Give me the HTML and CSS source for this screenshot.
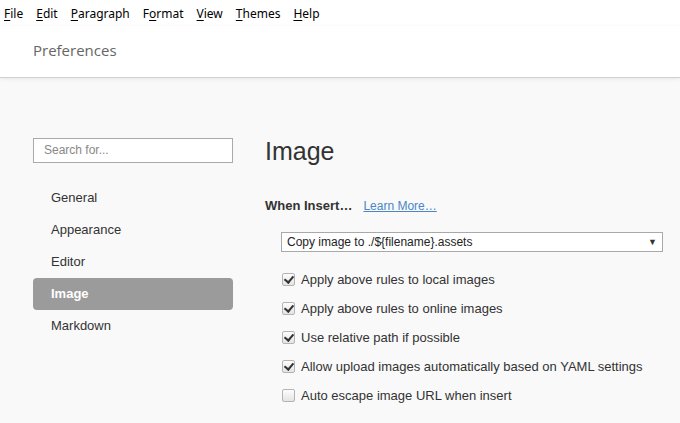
FILE: index.html
```html
<!DOCTYPE html>
<html>
<head>
<meta charset="utf-8">
<link rel="stylesheet" href="styles.css">
</head>
<body>
<div class="menubar">
  <span class="menu"><u>F</u>ile</span>
  <span class="menu"><u>E</u>dit</span>
  <span class="menu"><u>P</u>aragraph</span>
  <span class="menu">F<u>o</u>rmat</span>
  <span class="menu"><u>V</u>iew</span>
  <span class="menu"><u>T</u>hemes</span>
  <span class="menu"><u>H</u>elp</span>
</div>
<header class="titlebar">Preferences</header>
<main class="content">
  <aside class="sidebar">
    <div class="search">Search for...</div>
    <nav class="nav">
      <div class="nav-item">General</div>
      <div class="nav-item">Appearance</div>
      <div class="nav-item">Editor</div>
      <div class="nav-item active">Image</div>
      <div class="nav-item">Markdown</div>
    </nav>
  </aside>
  <section class="panel">
    <h1 class="panel-title">Image</h1>
    <div class="when">
      <span class="when-label">When Insert…</span>
      <a class="learn">Learn More…</a>
    </div>
    <div class="select">
      <span>Copy image to ./${filename}.assets</span>
      <span class="arrow">▼</span>
    </div>
    <div class="options">
      <label class="opt"><span class="cb checked"></span>Apply above rules to local images</label>
      <label class="opt"><span class="cb checked"></span>Apply above rules to online images</label>
      <label class="opt"><span class="cb checked"></span>Use relative path if possible</label>
      <label class="opt"><span class="cb checked"></span>Allow upload images automatically based on YAML settings</label>
      <label class="opt"><span class="cb"></span>Auto escape image URL when insert</label>
    </div>
  </section>
</main>
</body>
</html>
```
FILE: styles.css
```css
* { box-sizing: border-box; }
html, body { margin: 0; padding: 0; }
body {
  width: 680px;
  height: 423px;
  overflow: hidden;
  background: #f9f9f9;
  font-family: "Liberation Sans", Arial, sans-serif;
}
.menubar {
  height: 26px;
  background: #fff;
  display: flex;
  align-items: center;
  padding-left: 4px;
  gap: 13px;
  font-family: "Noto Sans", sans-serif;
  font-size: 12px;
  color: #000;
}
.menu u { text-decoration: underline; text-underline-offset: 2px; }
.titlebar {
  height: 52px;
  background: #fff;
  border-bottom: 1px solid #d0d0d0;
  box-shadow: 0 1px 4px rgba(0,0,0,0.08);
  padding-left: 33px;
  padding-top: 14px;
  font-family: "Open Sans", "Noto Sans", sans-serif;
  font-size: 15px;
  color: #666;
}
.content {
  display: flex;
  padding-top: 60px;
}
.sidebar {
  width: 200px;
  margin-left: 33px;
}
.search {
  height: 25px;
  border: 1px solid #aaa;
  background: #fff;
  padding-left: 10px;
  font-size: 12px;
  line-height: 23px;
  color: #888;
}
.nav { margin-top: 19px; }
.nav-item {
  height: 32px;
  line-height: 32px;
  padding-left: 18px;
  font-size: 13px;
  color: #333;
  border-radius: 4px;
}
.nav-item.active {
  background: #9b9b9b;
  color: #fff;
  font-weight: bold;
}
.panel {
  margin-left: 32px;
  flex: 1;
  padding-right: 17px;
}
.panel-title {
  margin: -2px 0 0;
  font-weight: normal;
  font-size: 25px;
  color: #333;
  line-height: 30px;
}
.when {
  margin-top: 32px;
  display: flex;
  align-items: baseline;
  gap: 11px;
}
.when-label {
  font-size: 13px;
  font-weight: bold;
  color: #333;
}
.learn {
  font-size: 12px;
  color: #4a86c8;
  text-decoration: underline;
}
.select {
  margin-top: 19px;
  margin-left: 16px;
  height: 20px;
  border: 1px solid #a9a9a9;
  background: #fff;
  display: flex;
  align-items: center;
  justify-content: space-between;
  padding: 0 5px 0 5px;
  font-size: 12px;
  color: #222;
}
.arrow { font-size: 9px; color: #333; }
.options {
  margin-top: 13px;
  margin-left: 17px;
  display: flex;
  flex-direction: column;
}
.opt {
  height: 29px;
  display: flex;
  align-items: center;
  font-size: 13px;
  color: #333;
}
.cb {
  position: relative;
  width: 13px;
  height: 13px;
  margin-right: 6px;
  border: 1px solid #b4b4b4;
  border-radius: 2px;
  background: linear-gradient(#fdfdfd, #e4e4e4);
}
.cb.checked::after {
  content: "";
  position: absolute;
  left: 3px;
  top: 0px;
  width: 4px;
  height: 7px;
  border-right: 2px solid #333;
  border-bottom: 2px solid #333;
  transform: rotate(40deg);
}
```
